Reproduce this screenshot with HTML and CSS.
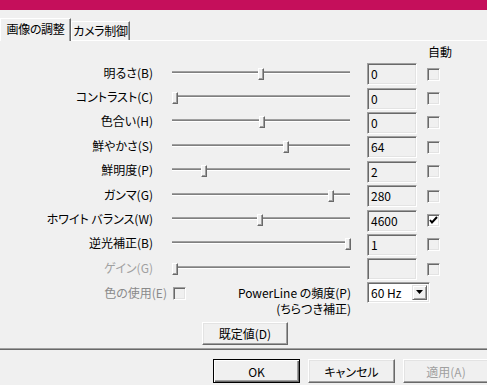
FILE: index.html
```html
<!DOCTYPE html>
<html>

<head>
    <title>プロパティ</title>
    <link rel="stylesheet" href="styles.css">
</head>

<body>

    <div class="titlebar"></div>

    <div class="tabs">
        <div class="tab active">画像の調整</div>
        <div class="tab">カメラ制御</div>
    </div>

    <div class="panel">
        <div class="auto-head">自動</div>

        <!-- Video proc amp rows -->
        <div class="rows">
            <div class="row">
                <div class="label">明るさ(B)</div>
                <div class="slider"><span class="thumb" style="left: 86px"></span></div>
                <div class="edit">0</div>
                <div class="check"></div>
            </div>
            <div class="row">
                <div class="label">コントラスト(C)</div>
                <div class="slider"><span class="thumb" style="left: 0px"></span></div>
                <div class="edit">0</div>
                <div class="check"></div>
            </div>
            <div class="row">
                <div class="label">色合い(H)</div>
                <div class="slider"><span class="thumb" style="left: 87px"></span></div>
                <div class="edit">0</div>
                <div class="check"></div>
            </div>
            <div class="row">
                <div class="label">鮮やかさ(S)</div>
                <div class="slider"><span class="thumb" style="left: 111px"></span></div>
                <div class="edit">64</div>
                <div class="check"></div>
            </div>
            <div class="row">
                <div class="label">鮮明度(P)</div>
                <div class="slider"><span class="thumb" style="left: 29px"></span></div>
                <div class="edit">2</div>
                <div class="check"></div>
            </div>
            <div class="row">
                <div class="label">ガンマ(G)</div>
                <div class="slider"><span class="thumb" style="left: 156px"></span></div>
                <div class="edit">280</div>
                <div class="check"></div>
            </div>
            <div class="row">
                <div class="label">ホワイト バランス(W)</div>
                <div class="slider"><span class="thumb" style="left: 85px"></span></div>
                <div class="edit">4600</div>
                <div class="check checked">
                    <svg width="11" height="11" viewBox="0 0 11 11">
                        <path d="M2 5 L4 7.5 L9 2" fill="none" stroke="#000" stroke-width="2"/>
                    </svg>
                </div>
            </div>
            <div class="row">
                <div class="label">逆光補正(B)</div>
                <div class="slider"><span class="thumb" style="left: 173px"></span></div>
                <div class="edit">1</div>
                <div class="check"></div>
            </div>
            <div class="row">
                <div class="label disabled">ゲイン(G)</div>
                <div class="slider"><span class="thumb" style="left: 0px"></span></div>
                <div class="edit"></div>
                <div class="check"></div>
            </div>
        </div>

        <div class="extra">
            <div class="use-color">色の使用(E)</div>
            <div class="check small-gap"></div>
            <div class="powerline">PowerLine の頻度(P)<br>(ちらつき補正)</div>
            <div class="combo">
                <span class="combo-text">60 Hz</span>
                <span class="combo-arrow">
                    <svg width="7" height="4" viewBox="0 0 7 4"><path d="M0 0 H7 L3.5 4 Z" fill="#000"/></svg>
                </span>
            </div>
        </div>

        <button class="btn defaults-btn">既定値(D)</button>
    </div>

    <div class="footer">
        <button class="btn default">OK</button>
        <button class="btn">キャンセル</button>
        <button class="btn" disabled>適用(A)</button>
    </div>

</body>

</html>
```

FILE: styles.css
```css
body {
    margin: 0;
    width: 487px;
    height: 385px;
    overflow: hidden;
    background-color: #f0f0f0;
    color: #000;
    font-family: "Noto Sans CJK JP", sans-serif;
    font-size: 12px;
    font-feature-settings: "palt";
}

.titlebar {
    height: 10px;
    background-color: #c50f5b;
}

/* tab strip */
.tabs {
    display: flex;
    align-items: flex-end;
    height: 30px;
}

.tab {
    box-sizing: border-box;
    height: 19px;
    width: 59px;
    line-height: 17px;
    text-align: center;
    letter-spacing: -0.3px;
    border-top: 1px solid #fff;
    border-left: 1px solid #fff;
    border-right: 1px solid #696969;
    box-shadow: inset -1px 0 #a0a0a0;
}

.tab.active {
    position: relative;
    z-index: 1;
    width: 71px;
    height: 23px;
    margin-bottom: -1px;
    line-height: 20px;
    background-color: #f0f0f0;
}

.panel {
    height: 308px;
    border-top: 1px solid #fff;
    border-bottom: 1px solid #696969;
    box-shadow: inset 0 -1px #a0a0a0;
}

.auto-head {
    height: 21px;
    line-height: 21px;
    padding-left: 428px;
}

.row {
    display: flex;
    align-items: center;
    height: 24.4px;
}

.label {
    width: 153px;
    text-align: right;
    line-height: 14px;
    padding-bottom: 3px;
    white-space: nowrap;
}

.disabled {
    color: #a0a0a0;
}

/* trackbar */
.slider {
    position: relative;
    width: 178px;
    height: 12px;
    margin-left: 19px;
    margin-bottom: 1px;
}

.slider::before {
    content: "";
    position: absolute;
    left: 0;
    right: 0;
    top: 3px;
    height: 1px;
    background-color: #808080;
    border-top: 1px solid #a0a0a0;
    border-bottom: 1px solid #fff;
}

.thumb {
    position: absolute;
    top: 0;
    box-sizing: border-box;
    width: 6px;
    height: 12px;
    background-color: #f0f0f0;
    border: 1px solid;
    border-color: #fff #696969 #696969 #fff;
    box-shadow: inset -1px -1px #a0a0a0;
}

.edit {
    box-sizing: border-box;
    width: 50px;
    height: 22px;
    margin-left: 17px;
    padding-left: 3px;
    line-height: 20px;
    border: 1px solid;
    border-color: #a0a0a0 #fff #fff #a0a0a0;
    box-shadow: inset 1px 1px #696969, inset -1px -1px #e3e3e3;
}

.check {
    box-sizing: border-box;
    width: 13px;
    height: 13px;
    margin-left: 10px;
    border: 1px solid;
    border-color: #a0a0a0 #fff #fff #a0a0a0;
    box-shadow: inset 1px 1px #696969, inset -1px -1px #e3e3e3;
}

.check.checked {
    background-color: #fff;
}

.check svg {
    display: block;
}

/* color / powerline row */
.extra {
    display: flex;
    align-items: flex-start;
    height: 40px;
}

.use-color {
    width: 167px;
    text-align: right;
    line-height: 16px;
    padding-top: 3px;
    color: #8a8a8a;
}

.check.small-gap {
    margin-left: 6px;
    margin-top: 5px;
}

.powerline {
    width: 165px;
    text-align: right;
    line-height: 16px;
    padding-top: 3px;
}

.combo {
    box-sizing: border-box;
    display: flex;
    align-items: center;
    justify-content: space-between;
    width: 63px;
    height: 21px;
    margin-left: 16px;
    padding: 2px;
    background-color: #fff;
    border: 1px solid;
    border-color: #a0a0a0 #fff #fff #a0a0a0;
    box-shadow: inset 1px 1px #696969, inset -1px -1px #e3e3e3;
}

.combo-text {
    padding-left: 1px;
}

.combo-arrow {
    box-sizing: border-box;
    display: flex;
    align-items: center;
    justify-content: center;
    width: 15px;
    height: 15px;
    background-color: #f0f0f0;
    border: 1px solid;
    border-color: #e3e3e3 #696969 #696969 #e3e3e3;
    box-shadow: inset 1px 1px #fff, inset -1px -1px #a0a0a0;
}

/* push buttons */
.btn {
    box-sizing: border-box;
    padding: 0;
    font: inherit;
    color: #000;
    background-color: #f0f0f0;
    border: 1px solid;
    border-color: #fff #696969 #696969 #fff;
    box-shadow: inset -1px -1px #a0a0a0, inset 1px 1px #e3e3e3;
}

.btn:disabled {
    color: #a0a0a0;
}

.btn.default {
    border: 1px solid #000;
    box-shadow: inset 1px 1px #fff, inset -1px -1px #696969, inset -2px -2px #a0a0a0;
}

.defaults-btn {
    display: block;
    width: 86px;
    height: 23px;
    margin-left: 202px;
}

.footer {
    display: flex;
    gap: 8px;
    padding-top: 9px;
    padding-left: 213px;
}

.footer .btn {
    flex: none;
    width: 87px;
    height: 24px;
}

.footer .btn:last-child {
    width: 86px;
}
```
